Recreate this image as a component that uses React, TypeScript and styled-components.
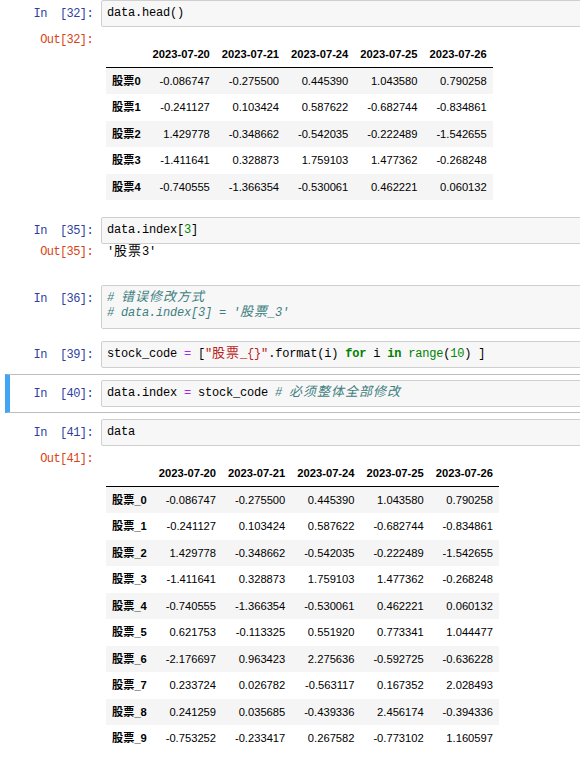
import React from 'react';
import styled, { createGlobalStyle, css } from 'styled-components';

const GlobalStyle = createGlobalStyle`
  html, body {
    margin: 0;
    padding: 0;
    overflow: hidden;
    background: #fff;
  }
`;

const Notebook = styled.div`
  width: 640px;
  margin-top: -6px;
`;

const Cell = styled.div<{ $selected?: boolean }>`
  display: grid;
  grid-template-columns: 90px 1fr;
  margin-left: 5px;
  padding: 5px 5px 5px 5px;
  border: 1px solid transparent;
  ${(p) =>
    p.$selected &&
    css`
      border-color: #bdbdbd;
      border-left: 5px solid #42a5f5;
      padding-left: 1px;
    `}
`;

const Prompt = styled.div<{ $out?: boolean }>`
  padding-right: 8px;
  text-align: right;
  white-space: pre;
  font-family: 'Liberation Mono', monospace;
  font-size: 12px;
  letter-spacing: -0.6px;
  color: ${(p) => (p.$out ? '#d84315' : '#303f9f')};
`;

const InPrompt = styled(Prompt)`
  line-height: 15px;
  padding-top: 7px;
`;

const OutPrompt = styled(Prompt)<{ $pad: number }>`
  line-height: 17px;
  padding-top: ${(p) => p.$pad}px;
`;

const InputBox = styled.div<{ $tall?: boolean }>`
  background: #f7f7f7;
  border: 1px solid #cfcfcf;
  border-radius: 2px;
  padding: 5px 5px ${(p) => (p.$tall ? 7 : 5)}px;
  height: fit-content;
  font-family: 'Liberation Mono', monospace;
  font-size: 12px;
  letter-spacing: -0.2px;
  line-height: 15px;
  color: #000;
  white-space: pre;
`;

const Cjk = styled.span`
  font-family: 'Noto Sans CJK SC', sans-serif;
  font-size: 13px;
  letter-spacing: 1px;
  line-height: 0;
`;

type TokKind = 'kw' | 'num' | 'str' | 'op' | 'cmt' | 'builtin';

const tokColors: Record<TokKind, string> = {
  kw: '#008000',
  num: '#008800',
  str: '#ba2121',
  op: '#aa22ff',
  cmt: '#408080',
  builtin: '#008000',
};

const Tok = styled.span<{ $kind: TokKind }>`
  color: ${(p) => tokColors[p.$kind]};
  font-weight: ${(p) => (p.$kind === 'kw' ? 'bold' : 'normal')};
  font-style: ${(p) => (p.$kind === 'cmt' ? 'italic' : 'normal')};
`;

const TextOut = styled.div`
  padding: 0 0 12px 6px;
  height: 17px;
  line-height: 17px;
  font-family: 'Liberation Mono', monospace;
  font-size: 12px;
  letter-spacing: -0.2px;
  color: #000;
  white-space: pre;
`;

const TableOut = styled.div`
  padding: 14px 0 5px 5px;
`;

const Frame = styled.table`
  border-collapse: collapse;
  border-spacing: 0;
  font-family: 'Liberation Sans', 'Noto Sans CJK SC', sans-serif;
  font-size: 11.2px;
  color: #000;
`;

const HeadCell = styled.th`
  padding: 5.5px 6px 5.5px 6px;
  line-height: 14.5px;
  height: 14.5px;
  text-align: right;
  font-weight: bold;
  border-bottom: 1px solid #000;
  white-space: nowrap;
`;

const Row = styled.tr`
  &:nth-child(odd) {
    background: #f5f5f5;
  }
`;

const IndexCell = styled.th`
  padding: 6px;
  height: 14.5px;
  line-height: 14.5px;
  text-align: left;
  font-weight: bold;
  white-space: nowrap;
`;

const ValueCell = styled.td`
  padding: 6px;
  height: 14.5px;
  line-height: 14.5px;
  text-align: right;
  white-space: nowrap;
`;

const dates = ['2023-07-20', '2023-07-21', '2023-07-24', '2023-07-25', '2023-07-26'];

const values = [
  ['-0.086747', '-0.275500', '0.445390', '1.043580', '0.790258'],
  ['-0.241127', '0.103424', '0.587622', '-0.682744', '-0.834861'],
  ['1.429778', '-0.348662', '-0.542035', '-0.222489', '-1.542655'],
  ['-1.411641', '0.328873', '1.759103', '1.477362', '-0.268248'],
  ['-0.740555', '-1.366354', '-0.530061', '0.462221', '0.060132'],
  ['0.621753', '-0.113325', '0.551920', '0.773341', '1.044477'],
  ['-2.176697', '0.963423', '2.275636', '-0.592725', '-0.636228'],
  ['0.233724', '0.026782', '-0.563117', '0.167352', '2.028493'],
  ['0.241259', '0.035685', '-0.439336', '2.456174', '-0.394336'],
  ['-0.753252', '-0.233417', '0.267582', '-0.773102', '1.160597'],
];

const DataFrame = ({ rows, sep }: { rows: number; sep: string }) => (
  <Frame>
    <thead>
      <tr>
        <HeadCell />
        {dates.map((d) => (
          <HeadCell key={d}>{d}</HeadCell>
        ))}
      </tr>
    </thead>
    <tbody>
      {values.slice(0, rows).map((r, i) => (
        <Row key={i}>
          <IndexCell>{`股票${sep}${i}`}</IndexCell>
          {r.map((v, j) => (
            <ValueCell key={j}>{v}</ValueCell>
          ))}
        </Row>
      ))}
    </tbody>
  </Frame>
);

const App = () => (
  <>
    <GlobalStyle />
    <Notebook>
      <Cell>
        <InPrompt>In  [32]:</InPrompt>
        <InputBox>data.head()</InputBox>
        <OutPrompt $out $pad={5}>Out[32]:</OutPrompt>
        <TableOut>
          <DataFrame rows={5} sep="" />
        </TableOut>
      </Cell>

      <Cell>
        <InPrompt>In  [35]:</InPrompt>
        <InputBox>
          data.index[<Tok $kind="num">3</Tok>]
        </InputBox>
        <OutPrompt $out $pad={0}>Out[35]:</OutPrompt>
        <TextOut>
          '<Cjk>股票</Cjk>3'
        </TextOut>
      </Cell>

      <Cell>
        <InPrompt>In  [36]:</InPrompt>
        <InputBox $tall>
          <Tok $kind="cmt">
            # <Cjk>错误修改方式</Cjk>
            {'\n'}# data.index[3] = '<Cjk>股票</Cjk>_3'
          </Tok>
        </InputBox>
      </Cell>

      <Cell>
        <InPrompt>In  [39]:</InPrompt>
        <InputBox>
          stock_code <Tok $kind="op">=</Tok> [
          <Tok $kind="str">
            "<Cjk>股票</Cjk>_{'{}'}"
          </Tok>
          .format(i) <Tok $kind="kw">for</Tok> i <Tok $kind="kw">in</Tok>{' '}
          <Tok $kind="builtin">range</Tok>(<Tok $kind="num">10</Tok>) ]
        </InputBox>
      </Cell>

      <Cell $selected>
        <InPrompt>In  [40]:</InPrompt>
        <InputBox>
          data.index <Tok $kind="op">=</Tok> stock_code{' '}
          <Tok $kind="cmt">
            # <Cjk>必须整体全部修改</Cjk>
          </Tok>
        </InputBox>
      </Cell>

      <Cell>
        <InPrompt>In  [41]:</InPrompt>
        <InputBox>data</InputBox>
        <OutPrompt $out $pad={5}>Out[41]:</OutPrompt>
        <TableOut>
          <DataFrame rows={10} sep="_" />
        </TableOut>
      </Cell>
    </Notebook>
  </>
);

export default App;
